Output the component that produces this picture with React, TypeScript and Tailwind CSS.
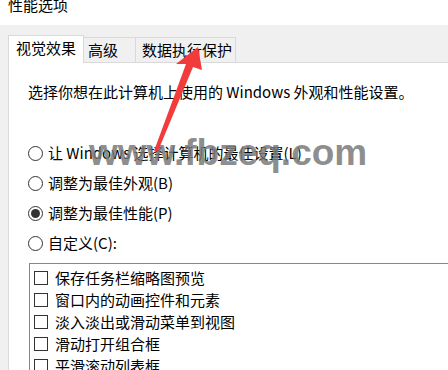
const font = "font-['Microsoft_YaHei','Noto_Sans_CJK_SC',sans-serif]"

const radios = [
  { label: "让 Windows 选择计算机的最佳设置(L)", checked: false },
  { label: "调整为最佳外观(B)", checked: false },
  { label: "调整为最佳性能(P)", checked: true },
  { label: "自定义(C):", checked: false },
]

const effects = [
  "保存任务栏缩略图预览",
  "窗口内的动画控件和元素",
  "淡入淡出或滑动菜单到视图",
  "滑动打开组合框",
  "平滑滚动列表框",
]

function Radio({ checked }: { checked: boolean }) {
  return (
    <span className="w-[15px] h-[15px] rounded-full border border-[#333] bg-white flex items-center justify-center shrink-0">
      {checked && <span className="w-[9px] h-[9px] rounded-full bg-[#333]" />}
    </span>
  )
}

export default function App() {
  return (
    <div className={`w-[448px] h-[370px] overflow-hidden relative bg-white text-black ${font}`}>
      {/* title */}
      <div className="h-[25px] pl-2 overflow-hidden">
        <div className="text-[15px] leading-[15px] -mt-[3px]">性能选项</div>
      </div>

      <div className="bg-[#f0f0f0] pt-[10px] pl-2 h-[345px]">
        {/* tabs */}
        <div className="flex items-end h-[27px] text-[15px]">
          <div className="w-[76px] h-[28px] -mb-[1px] relative z-10 bg-white border border-b-0 border-[#d9d9d9] flex items-center justify-center pb-[2px]">
            视觉效果
          </div>
          <div className="w-[52px] h-[25px] border-t border-r border-[#d9d9d9] flex items-center pl-[4px] pt-[1px]">
            高级
          </div>
          <div className="w-[100px] h-[25px] border-t border-r border-[#d9d9d9] flex items-center pl-[6px] pt-[1px]">
            数据执行保护
          </div>
        </div>

        {/* panel */}
        <div className="bg-white border-t border-l border-[#d9d9d9] h-full pl-[19px] pt-[20px] text-[15px]">
          <div className="leading-[18px]">选择你想在此计算机上使用的 Windows 外观和性能设置。</div>

          <div className="mt-[43px] flex flex-col gap-[12px]">
            {radios.map((r) => (
              <div key={r.label} className="flex items-center gap-[5px] h-[18px] whitespace-nowrap">
                <Radio checked={r.checked} />
                <span>{r.label}</span>
              </div>
            ))}
          </div>

          <div className="mt-[11px] border-t border-l border-[#828790] ml-[1px] pt-[5px] pl-[4px] flex flex-col gap-[4px]">
            {effects.map((e) => (
              <div key={e} className="flex items-center gap-[7px] h-[18px] whitespace-nowrap">
                <span className="w-[14px] h-[14px] border border-[#333] bg-white shrink-0" />
                <span>{e}</span>
              </div>
            ))}
          </div>
        </div>
      </div>

      {/* watermark */}
      <div className="absolute left-[89px] top-[134px] text-[37px] font-bold leading-none text-[#7a7a7a]/85 font-['Liberation_Sans',Arial,sans-serif] whitespace-nowrap pointer-events-none">
        www.fbzeq.com
      </div>

      {/* red arrow */}
      <svg className="absolute left-0 top-0 pointer-events-none" width="448" height="370" viewBox="0 0 448 370">
        <polygon
          points="198,47 176,64 186,64 154,151 158,151 193,67 202,70"
          fill="#f23b3b"
        />
      </svg>
    </div>
  )
}
